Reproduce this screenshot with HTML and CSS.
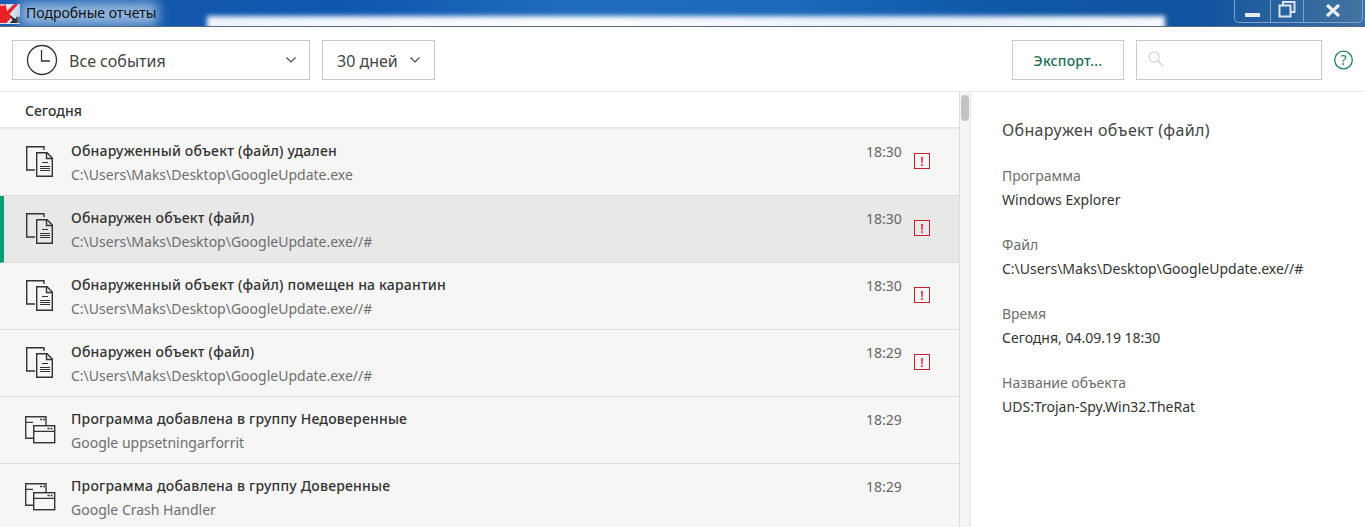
FILE: index.html
```html
<!DOCTYPE html>
<html lang="ru">
<head>
<meta charset="utf-8">
<title>Подробные отчеты</title>
<link rel="stylesheet" href="styles.css">
</head>
<body>
<svg class="defs" width="0" height="0" aria-hidden="true">
  <symbol id="file" viewBox="0 0 28 32">
    <path d="M18 4V.7H.7V24H9" fill="none" stroke="#333" stroke-width="1.4"/>
    <path d="M10.7 6.7H21L26.3 12V30.3H10.7Z" fill="none" stroke="#333" stroke-width="1.4"/>
    <path d="M20.5 6.7V12.5H26.3" fill="none" stroke="#333" stroke-width="1.4"/>
    <path d="M16 16.5H22M14 20.5H24M14 22.5H24M14 24.5H24" stroke="#333" stroke-width="1.1"/>
  </symbol>
  <symbol id="app" viewBox="0 0 31 28">
    <path d="M8 22.3H.7V.7H21V9" fill="none" stroke="#3a3a3a" stroke-width="1.4"/>
    <path d="M.7 6.3H8M15 3.5H17M18 3.5H20" fill="none" stroke="#3a3a3a" stroke-width="1.3"/>
    <rect x="8.7" y="9.7" width="21" height="17" fill="none" stroke="#333" stroke-width="1.4"/>
    <path d="M8.7 15.3H29.7M22.5 12.5H24.5M25.5 12.5H27.5" fill="none" stroke="#333" stroke-width="1.3"/>
  </symbol>
</svg>

<header class="titlebar">
  <svg class="kicon" width="20" height="20" viewBox="0 0 20 20">
    <rect width="20" height="20" fill="#dfe7f0"/>
    <path d="M0 0H5.500L7 7L14 0H18.500L9.500 10L12 13L6.500 19H0V8Z" fill="#ea2027"/>
    <path d="M0 0H5V2H0Z" fill="#f4a0a0"/>
    <path d="M10 11L15 15L17 12.500V19H9.500L12.500 16.500Z" fill="#1c1c1c"/>
    <path d="M17 12.500L20 13V19H17Z" fill="#555"/>
  </svg>
  <span class="apptitle">Подробные отчеты</span>
  <div class="glow"></div>
  <div class="winctl">
    <span class="wbtn wmin"><i></i></span>
    <span class="wbtn wmax"><svg width="18" height="17" viewBox="0 0 18 17"><path d="M5 4V1H16.500V11H13M1.500 4.500H12.500V15.500H1.500Z" fill="none" stroke="#dce3ec" stroke-width="2"/></svg></span>
    <span class="wbtn wclose"><svg width="16" height="13" viewBox="0 0 16 13"><path d="M2 1L14 12M14 1L2 12" stroke="#e8edf2" stroke-width="3.200"/></svg></span>
  </div>
</header>

<section class="toolbar">
  <button class="select select-events">
    <svg class="clock" width="32" height="32" viewBox="0 0 32 32"><circle cx="16" cy="16" r="14.500" fill="none" stroke="#333" stroke-width="1.300"/><path d="M15.500 6V17H24" fill="none" stroke="#333" stroke-width="1.300"/></svg>
    <span class="select-label">Все события</span>
    <svg class="chev" width="10" height="6" viewBox="0 0 10 6"><path d="M.5.5L5 5L9.500.5" fill="none" stroke="#444" stroke-width="1.100"/></svg>
  </button>
  <button class="select select-days">
    <span class="select-label">30 дней</span>
    <svg class="chev" width="10" height="6" viewBox="0 0 10 6"><path d="M.5.5L5 5L9.500.5" fill="none" stroke="#444" stroke-width="1.100"/></svg>
  </button>
  <button class="export">Экспорт...</button>
  <div class="search">
    <svg width="16" height="16" viewBox="0 0 16 16"><circle cx="6" cy="6" r="5" fill="none" stroke="#cfcfcf" stroke-width="1.100"/><path d="M9.500 9.500L15 15" stroke="#cfcfcf" stroke-width="1.200"/></svg>
  </div>
  <svg class="help" width="20" height="20" viewBox="0 0 20 20"><circle cx="9.500" cy="10" r="8.800" fill="none" stroke="#1c7f68" stroke-width="1.300"/><text x="9.500" y="14.500" text-anchor="middle" class="helpq">?</text></svg>
</section>

<main class="content">
  <div class="listpane">
    <div class="daybar">Сегодня</div>
    <article class="row">
      <svg class="ico-file"><use href="#file"/></svg>
      <div class="rowtext"><div class="rowtitle">Обнаруженный объект (файл) удален</div><div class="rowsub">C:\Users\Maks\Desktop\GoogleUpdate.exe</div></div>
      <time class="rowtime">18:30</time><span class="flag">!</span>
    </article>
    <article class="row row-selected">
      <svg class="ico-file"><use href="#file"/></svg>
      <div class="rowtext"><div class="rowtitle">Обнаружен объект (файл)</div><div class="rowsub">C:\Users\Maks\Desktop\GoogleUpdate.exe//#</div></div>
      <time class="rowtime">18:30</time><span class="flag">!</span>
    </article>
    <article class="row">
      <svg class="ico-file"><use href="#file"/></svg>
      <div class="rowtext"><div class="rowtitle">Обнаруженный объект (файл) помещен на карантин</div><div class="rowsub">C:\Users\Maks\Desktop\GoogleUpdate.exe//#</div></div>
      <time class="rowtime">18:30</time><span class="flag">!</span>
    </article>
    <article class="row">
      <svg class="ico-file"><use href="#file"/></svg>
      <div class="rowtext"><div class="rowtitle">Обнаружен объект (файл)</div><div class="rowsub">C:\Users\Maks\Desktop\GoogleUpdate.exe//#</div></div>
      <time class="rowtime">18:29</time><span class="flag">!</span>
    </article>
    <article class="row">
      <svg class="ico-app"><use href="#app"/></svg>
      <div class="rowtext"><div class="rowtitle">Программа добавлена в группу Недоверенные</div><div class="rowsub">Google uppsetningarforrit</div></div>
      <time class="rowtime">18:29</time><span class="flag flag-none"></span>
    </article>
    <article class="row">
      <svg class="ico-app"><use href="#app"/></svg>
      <div class="rowtext"><div class="rowtitle">Программа добавлена в группу Доверенные</div><div class="rowsub">Google Crash Handler</div></div>
      <time class="rowtime">18:29</time><span class="flag flag-none"></span>
    </article>
  </div>
  <div class="scrollbar"><div class="thumb"></div></div>
  <aside class="details">
    <h2 class="dtitle">Обнаружен объект (файл)</h2>
    <dl class="dlist">
      <dt>Программа</dt><dd>Windows Explorer</dd>
      <dt>Файл</dt><dd>C:\Users\Maks\Desktop\GoogleUpdate.exe//#</dd>
      <dt>Время</dt><dd>Сегодня, 04.09.19 18:30</dd>
      <dt>Название объекта</dt><dd>UDS:Trojan-Spy.Win32.TheRat</dd>
    </dl>
  </aside>
</main>
</body>
</html>
```
FILE: styles.css
```css
* { box-sizing: border-box; }
html, body { margin: 0; height: 100%; overflow: hidden; }
body { font-family: "Noto Sans", "Open Sans", sans-serif; font-size: 14px; color: #333; background: #fff; display: flex; flex-direction: column; }
.defs { position: absolute; }

.titlebar { height: 27px; flex: none; display: flex; align-items: flex-start; position: relative; overflow: hidden; border-bottom: 1px solid #5b6b80;
  background: linear-gradient(90deg, #1a5fb4 0, #1257ab 12%, #0f56b0 25%, #1f6cbc 42%, #1b69b8 58%, #0f58a8 72%, #10539f 88%, #3d6ea4 100%); }
.kicon { flex: none; margin-top: 4px; }
.apptitle { font-size: 14px; line-height: 26px; color: #111; margin-left: 6px; position: relative; z-index: 1; white-space: nowrap; }
.apptitle::before { content: ""; position: absolute; inset: 2px -2px 0 -6px; background: #8fb4dc; filter: blur(6px); z-index: -1; }
.glow { position: absolute; left: 207px; right: 200px; top: 16px; bottom: -6px; background: linear-gradient(90deg, #eef4fb, #fbfdff 40%, #e9f1fa 70%, #f6fafe); filter: blur(2.500px); }
.winctl { margin-left: auto; margin-right: 2px; height: 23px; display: flex; position: relative; border: 1px solid #7da2cc; border-top: 0; border-radius: 0 0 5px 5px; background: linear-gradient(90deg, #1d5a9e, #2a649f 40%, #44749f 100%); }
.wbtn { display: flex; align-items: center; justify-content: center; height: 100%; border-right: 1px solid #7da2cc; }
.wbtn:last-child { border-right: 0; }
.wmin { width: 36px; align-items: flex-end; padding-bottom: 5px; }
.wmin i { display: block; width: 15px; height: 4px; background: #e6ebf1; }
.wmax { width: 33px; padding-bottom: 3px; }
.wclose { width: 58px; padding-bottom: 1px; }

.toolbar { height: 65px; flex: none; display: flex; align-items: flex-start; padding: 13px 11px 0 12px; border-bottom: 1px solid #ececec; }
.select { height: 40px; background: #fff; border: 1px solid #c9c9c9; display: flex; align-items: center; padding: 0; font: inherit; color: #444; }
.select-label { font-size: 16px; line-height: 20px; padding-top: 2px; }
.select-events { width: 298px; padding-left: 13px; }
.clock { flex: none; margin-right: 11px; }
.select-events .chev { margin-left: auto; margin-right: 13px; }
.select-days { width: 113px; margin-left: 12px; padding-left: 14px; }
.select-days .chev { margin-left: 12px; }
.export { width: 112px; height: 40px; margin-left: auto; background: #fff; border: 1px solid #c9c9c9; font: inherit; font-size: 14px; font-weight: 500; letter-spacing: .2px; color: #1a6b5a; padding: 0; }
.search { width: 186px; height: 40px; margin-left: 12px; border: 1px solid #c9c9c9; padding: 10px 0 0 11px; }
.search svg { display: block; }
.help { margin: 10px 0 0 12px; flex: none; }
.helpq { font-size: 14px; fill: #1c7f68; }

.content { flex: 1; min-height: 0; display: flex; }
.listpane { width: 960px; flex: none; overflow: hidden; border-right: 1px solid #dcdcdc; }
.daybar { height: 37px; padding-left: 25px; line-height: 37px; font-size: 14px; font-weight: 500; color: #333; border-bottom: 2px solid #e9e9e9; }
.row { height: 67px; display: flex; align-items: flex-start; background: #f6f6f6; border-bottom: 1px solid #dedede; padding-left: 26px; }
.row-selected { background: #e8e8e8; border-left: 4px solid #009f76; padding-left: 22px; }
.ico-file { width: 28px; height: 32px; margin-top: 17px; flex: none; }
.ico-app { width: 31px; height: 28px; margin-top: 19px; margin-left: -1px; margin-right: -2px; flex: none; }
.rowtext { flex: 1; margin-left: 17px; min-width: 0; }
.rowtitle { margin-top: 12px; line-height: 20px; font-size: 14px; font-weight: 500; letter-spacing: .2px; color: #333; white-space: nowrap; }
.rowsub { margin-top: 4px; line-height: 20px; font-size: 14px; color: #6e6e6e; white-space: nowrap; }
.rowtime { margin-top: 13px; line-height: 20px; font-size: 14px; color: #666; width: 36px; flex: none; }
.flag { width: 16px; height: 16px; margin: 24px 29px 0 12px; border: 1px solid #c8202f; color: #d8364a; font-size: 13px; font-weight: 600; line-height: 14px; text-align: center; flex: none; }
.flag-none { border: 0; }

.scrollbar { width: 11px; flex: none; background: #f5f5f5; border-right: 1px solid #e8e8e8; padding: 3px 1px 0; }
.thumb { width: 8px; height: 26px; border-radius: 4px; background: #c4c4c4; }

.details { flex: 1; padding: 27px 0 0 31px; min-width: 0; }
.dtitle { margin: 0; font-size: 16px; line-height: 22px; font-weight: 400; letter-spacing: .35px; color: #444; }
.dlist { margin: 25px 0 0; font-size: 14px; }
.dlist dt { line-height: 20px; color: #6e6e6e; }
.dlist dd { margin: 4px 0 25px; line-height: 20px; color: #333; white-space: nowrap; }
```
